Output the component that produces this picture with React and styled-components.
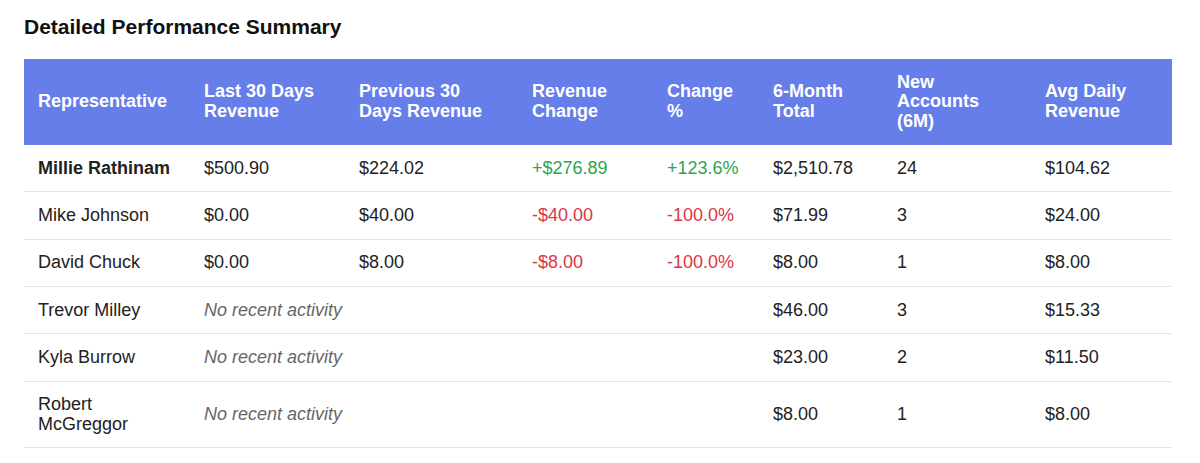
import React from "react";
import styled, { createGlobalStyle } from "styled-components";

const Global = createGlobalStyle`
  html, body { margin: 0; padding: 0; background: #fff; }
  body { font-family: "Liberation Sans", Arial, sans-serif; color: #222; }
`;

const Page = styled.div`
  padding: 15px 28px 16px 24px;
`;

const Title = styled.h3`
  margin: 0 0 20px;
  font-size: 21px;
  font-weight: 700;
  color: #111;
  line-height: 24px;
`;

const Table = styled.table`
  width: 1148px;
  border-collapse: collapse;
  table-layout: fixed;
  font-size: 18px;
`;

const HeadRow = styled.tr`
  background: #667eea;
`;

const Th = styled.th`
  color: #fff;
  font-weight: 700;
  text-align: left;
  padding: 13.7px 14px;
  line-height: 19.6px;
  vertical-align: middle;
`;

const Row = styled.tr`
  border-bottom: 1px solid #e3e3e3;
`;

const Td = styled.td`
  padding: 13.5px 14px 13.2px;
  line-height: 19.6px;
  vertical-align: middle;
  color: ${(p) => (p.$tone === "pos" ? "#2ea44f" : p.$tone === "neg" ? "#dc3545" : "#222")};
  font-weight: ${(p) => (p.$bold ? 700 : 400)};
`;

const Muted = styled.td`
  padding: 13.5px 14px 13.2px;
  line-height: 19.6px;
  font-style: italic;
  color: #666;
`;

const widths = [166, 155, 173, 135, 106, 124, 148, 141];
const headers = [
  "Representative",
  "Last 30 Days Revenue",
  "Previous 30 Days Revenue",
  "Revenue Change",
  "Change %",
  "6-Month Total",
  "New Accounts (6M)",
  "Avg Daily Revenue",
];

const rows = [
  { name: "Millie Rathinam", bold: true, last: "$500.90", prev: "$224.02", chg: "+$276.89", pct: "+123.6%", tone: "pos", total: "$2,510.78", acc: "24", avg: "$104.62" },
  { name: "Mike Johnson", last: "$0.00", prev: "$40.00", chg: "-$40.00", pct: "-100.0%", tone: "neg", total: "$71.99", acc: "3", avg: "$24.00" },
  { name: "David Chuck", last: "$0.00", prev: "$8.00", chg: "-$8.00", pct: "-100.0%", tone: "neg", total: "$8.00", acc: "1", avg: "$8.00" },
  { name: "Trevor Milley", none: true, total: "$46.00", acc: "3", avg: "$15.33" },
  { name: "Kyla Burrow", none: true, total: "$23.00", acc: "2", avg: "$11.50" },
  { name: "Robert McGreggor", none: true, total: "$8.00", acc: "1", avg: "$8.00" },
];

export default function App() {
  return (
    <>
      <Global />
      <Page>
        <Title>Detailed Performance Summary</Title>
        <Table>
          <colgroup>
            {widths.map((w, i) => (
              <col key={i} style={{ width: w }} />
            ))}
          </colgroup>
          <thead>
            <HeadRow>
              {headers.map((h) => (
                <Th key={h}>{h}</Th>
              ))}
            </HeadRow>
          </thead>
          <tbody>
            {rows.map((r) => (
              <Row key={r.name}>
                <Td $bold={r.bold}>{r.name}</Td>
                {r.none ? (
                  <Muted colSpan={4}>No recent activity</Muted>
                ) : (
                  <>
                    <Td>{r.last}</Td>
                    <Td>{r.prev}</Td>
                    <Td $tone={r.tone}>{r.chg}</Td>
                    <Td $tone={r.tone}>{r.pct}</Td>
                  </>
                )}
                <Td>{r.total}</Td>
                <Td>{r.acc}</Td>
                <Td>{r.avg}</Td>
              </Row>
            ))}
          </tbody>
        </Table>
      </Page>
    </>
  );
}
